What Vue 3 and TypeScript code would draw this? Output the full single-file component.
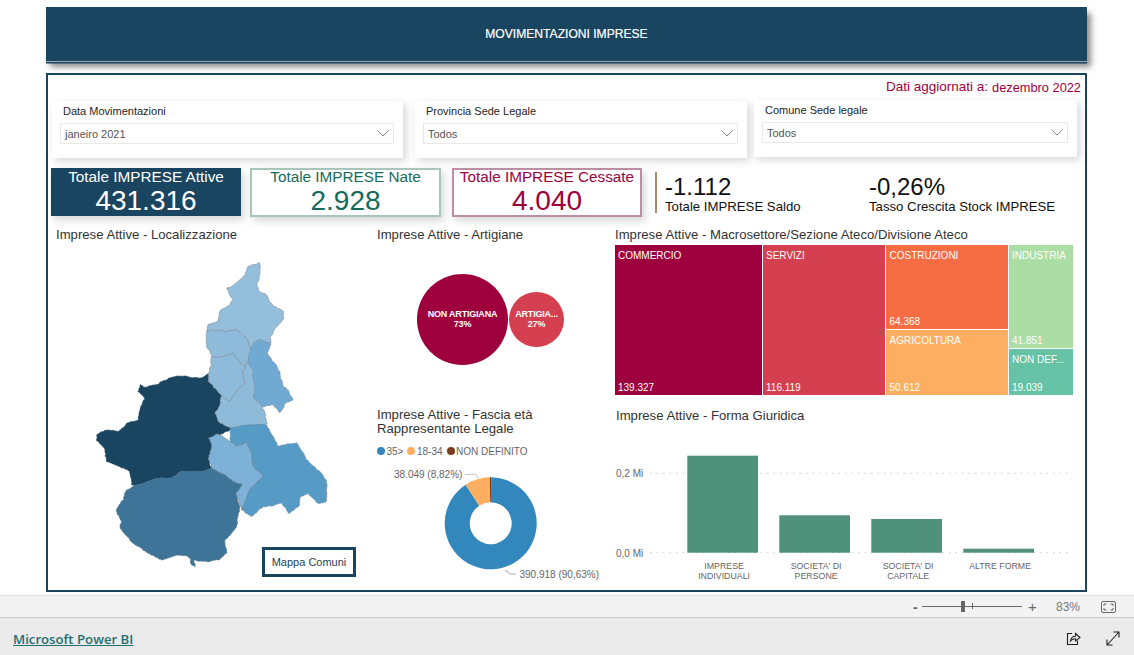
<script setup lang="ts">
type Pt = [number, number]

function hash(x: number, y: number): number {
  const v = Math.sin(x * 12.9898 + y * 78.233) * 43758.5453
  return v - Math.floor(v)
}

// Midpoint displacement keyed on the position, so shared borders stay identical.
function roughEdge(a: Pt, b: Pt, amp: number, out: Pt[]): void {
  const len = Math.hypot(b[0] - a[0], b[1] - a[1])
  if (len < 5) {
    out.push(b)
    return
  }
  const mx = Math.round((a[0] + b[0]) * 2) / 4
  const my = Math.round((a[1] + b[1]) * 2) / 4
  const m: Pt = [mx + (hash(mx, my) - 0.5) * amp, my + (hash(my, mx) - 0.5) * amp]
  roughEdge(a, m, amp * 0.8, out)
  roughEdge(m, b, amp * 0.8, out)
}

function toPath(pts: Pt[]): string {
  const out: Pt[] = [pts[0]]
  pts.forEach((p, i) => roughEdge(p, pts[(i + 1) % pts.length], 4.5, out))
  return 'M' + out.map((p) => `${p[0].toFixed(1)} ${p[1].toFixed(1)}`).join('L') + 'Z'
}

const regions = [
  {
    name: 'Torino',
    fill: '#1a4560',
    stroke: '#1a4560',
    pts: [[385, 372], [360, 385], [300, 378], [265, 385], [235, 403], [190, 412], [180, 405], [173, 425], [195, 445], [180, 480], [175, 510], [140, 520], [115, 545], [85, 540], [50, 555], [50, 572], [75, 600], [80, 635], [150, 665], [155, 705], [170, 705], [230, 685], [270, 685], [300, 665], [350, 665], [395, 655], [385, 625], [395, 590], [385, 565], [430, 550], [455, 535], [415, 515], [405, 490], [420, 465], [425, 435], [385, 395]] as Pt[]
  },
  {
    name: 'Cuneo',
    fill: '#3e7498',
    stroke: '#4a6e88',
    pts: [[170, 705], [140, 720], [130, 750], [108, 780], [122, 810], [120, 835], [160, 880], [205, 910], [245, 930], [300, 915], [325, 920], [335, 945], [345, 950], [342, 930], [385, 935], [415, 930], [440, 910], [435, 870], [470, 830], [475, 790], [480, 770], [468, 730], [487, 705], [460, 695], [430, 672], [395, 655], [350, 665], [300, 665], [270, 685], [230, 685]] as Pt[]
  },
  {
    name: 'Verbano',
    fill: '#93bedc',
    stroke: '#84909a',
    pts: [[538, 38], [541, 70], [530, 100], [535, 122], [560, 135], [578, 165], [608, 182], [610, 208], [585, 235], [570, 262], [572, 280], [540, 268], [520, 280], [512, 300], [500, 265], [465, 238], [435, 245], [400, 240], [380, 245], [385, 222], [415, 212], [422, 180], [450, 165], [460, 150], [440, 115], [470, 98], [495, 75], [505, 50]] as Pt[]
  },
  {
    name: 'Biella',
    fill: '#8fbbdb',
    stroke: '#84909a',
    pts: [[380, 245], [400, 240], [435, 245], [465, 238], [500, 265], [512, 300], [503, 335], [495, 350], [460, 310], [430, 320], [395, 322], [382, 295], [378, 270]] as Pt[]
  },
  {
    name: 'Vercelli',
    fill: '#8fbbdb',
    stroke: '#84909a',
    pts: [[395, 322], [430, 320], [460, 310], [495, 350], [488, 365], [495, 395], [470, 425], [450, 455], [425, 435], [385, 395], [385, 372], [392, 350]] as Pt[]
  },
  {
    name: 'Vercelli sud',
    fill: '#8fbbdb',
    stroke: '#84909a',
    pts: [[495, 350], [503, 335], [520, 365], [522, 445], [545, 465], [555, 490], [562, 522], [510, 525], [455, 535], [415, 515], [405, 490], [420, 465], [425, 435], [450, 455], [470, 425], [495, 395], [488, 365]] as Pt[]
  },
  {
    name: 'Novara',
    fill: '#70aad3',
    stroke: '#7d93a3',
    pts: [[512, 300], [520, 280], [540, 268], [572, 280], [562, 310], [585, 340], [600, 370], [610, 410], [625, 420], [640, 450], [615, 460], [600, 488], [580, 465], [550, 470], [522, 445], [520, 365], [503, 335]] as Pt[]
  },
  {
    name: 'Alessandria',
    fill: '#569bc6',
    stroke: '#6f8ea3',
    pts: [[450, 535], [510, 525], [560, 525], [585, 570], [595, 590], [650, 578], [680, 630], [725, 670], [740, 695], [738, 755], [715, 760], [685, 730], [660, 740], [655, 770], [625, 790], [605, 760], [550, 770], [515, 800], [485, 780], [500, 745], [510, 715], [550, 680], [520, 650], [515, 610], [500, 575], [470, 590], [450, 575]] as Pt[]
  },
  {
    name: 'Asti',
    fill: '#7db1d7',
    stroke: '#6b7f8e',
    pts: [[385, 625], [395, 590], [385, 565], [410, 552], [450, 575], [470, 590], [500, 575], [515, 610], [520, 650], [550, 680], [510, 715], [500, 745], [485, 780], [468, 730], [487, 705], [460, 695], [430, 672], [395, 650]] as Pt[]
  }
].map((r) => ({ ...r, d: toPath(r.pts) }))

const filters = [
  { id: 'data', label: 'Data Movimentazioni', value: 'janeiro 2021' },
  { id: 'provincia', label: 'Provincia Sede Legale', value: 'Todos' },
  { id: 'comune', label: 'Comune Sede legale', value: 'Todos' }
]

const kpis = [
  { id: 'attive', title: 'Totale IMPRESE Attive', value: '431.316' },
  { id: 'nate', title: 'Totale IMPRESE Nate', value: '2.928' },
  { id: 'cessate', title: 'Totale IMPRESE Cessate', value: '4.040' }
]

// Donut slices, clockwise from 12 o'clock.
const donutCx = 120.7
const donutCy = 63.3
function slice(from: number, to: number, r1: number, r2: number): string {
  const pt = (a: number, r: number) => {
    const t = (a / 100) * Math.PI * 2
    return `${(donutCx + Math.sin(t) * r).toFixed(2)} ${(donutCy - Math.cos(t) * r).toFixed(2)}`
  }
  const large = to - from > 50 ? 1 : 0
  return `M${pt(from, r1)}A${r1} ${r1} 0 ${large} 1 ${pt(to, r1)}L${pt(to, r2)}A${r2} ${r2} 0 ${large} 0 ${pt(from, r2)}Z`
}
const slices = [
  { fill: '#3288bd', d: slice(0.2, 90.83, 46, 21) },
  { fill: '#fdae61', d: slice(90.83, 99.65, 46, 21) },
  { fill: '#7a3a20', d: slice(99.65, 100.2, 46, 21) }
]

const legend = [
  { label: '35>', color: '#3288bd' },
  { label: '18-34', color: '#fdae61' },
  { label: 'NON DEFINITO', color: '#7a3a20' }
]

const bars = [
  { x: 77.3, y: 30.7, h: 97, lines: ['IMPRESE', 'INDIVIDUALI'] },
  { x: 169.3, y: 90.3, h: 37.4, lines: ["SOCIETA' DI", 'PERSONE'] },
  { x: 261.3, y: 94, h: 33.7, lines: ["SOCIETA' DI", 'CAPITALE'] },
  { x: 353.3, y: 123.7, h: 4, lines: ['ALTRE FORME'] }
]
</script>

<template>
  <div class="page">
    <main class="report">
      <header class="banner">MOVIMENTAZIONI IMPRESE</header>

      <section class="panel">
        <div class="updated">
          <span>Dati aggiornati a:</span>
          <span class="updated-date">dezembro 2022</span>
        </div>

        <div class="filters">
          <div v-for="f in filters" :key="f.id" class="slicer" :class="`slicer-${f.id}`">
            <div class="slicer-label">{{ f.label }}</div>
            <div class="slicer-box">
              <span>{{ f.value }}</span>
              <svg class="chevron" width="12" height="7" viewBox="0 0 12 7">
                <path d="M0.5 0.5L6 6L11.5 0.5" fill="none" stroke="#8a8a8a" stroke-width="1" />
              </svg>
            </div>
          </div>
        </div>

        <div class="kpis">
          <div v-for="k in kpis" :key="k.id" class="kpi" :class="`kpi-${k.id}`">
            <div class="kpi-title">{{ k.title }}</div>
            <div class="kpi-value">{{ k.value }}</div>
          </div>
          <div class="stat stat-saldo">
            <div class="stat-value">-1.112</div>
            <div class="stat-label">Totale IMPRESE Saldo</div>
          </div>
          <div class="stat stat-tasso">
            <div class="stat-value">-0,26%</div>
            <div class="stat-label">Tasso Crescita Stock IMPRESE</div>
          </div>
        </div>

        <div class="body">
          <div class="col-map">
            <h2 class="title title-map">Imprese Attive - Localizzazione</h2>
            <div class="map">
              <svg width="290" height="340" viewBox="0 0 870 1020">
                <path
                  v-for="r in regions"
                  :key="r.name"
                  :d="r.d"
                  :fill="r.fill"
                  :stroke="r.stroke"
                  stroke-width="2"
                  stroke-linejoin="round"
                />
              </svg>
              <div class="map-button">Mappa Comuni</div>
            </div>
          </div>

          <div class="col-mid">
            <div class="block-bubbles">
              <h2 class="title">Imprese Attive - Artigiane</h2>
              <div class="bubbles">
                <div class="bubble bubble-big"><span>NON ARTIGIANA</span><span>73%</span></div>
                <div class="bubble bubble-small"><span>ARTIGIA...</span><span>27%</span></div>
              </div>
            </div>
            <div class="block-donut">
              <h2 class="title title-two">Imprese Attive - Fascia età<br />Rappresentante Legale</h2>
              <div class="legend">
                <span v-for="l in legend" :key="l.label" class="legend-item">
                  <i class="dot" :style="{ background: l.color }"></i>{{ l.label }}
                </span>
              </div>
              <svg class="donut" width="240" height="130" viewBox="0 0 240 130">
                <path v-for="s in slices" :key="s.fill" :d="s.d" :fill="s.fill" />
                <path d="M95 14.300H106L108.500 18.300" fill="none" stroke="#c4c4c4" />
                <path d="M135 110L140 114H146" fill="none" stroke="#a8a8a8" />
                <text x="24" y="17.500" class="donut-label">38.049 (8,82%)</text>
                <text x="149.500" y="117.500" class="donut-label">390.918 (90,63%)</text>
              </svg>
            </div>
          </div>

          <div class="col-right">
            <h2 class="title title-tree">Imprese Attive - Macrosettore/Sezione Ateco/Divisione Ateco</h2>
            <div class="treemap">
              <div class="cell cell-comm"><span>COMMERCIO</span><span>139.327</span></div>
              <div class="cell cell-serv"><span>SERVIZI</span><span>116.119</span></div>
              <div class="tree-col tree-col-a">
                <div class="cell cell-cost"><span>COSTRUZIONI</span><span>64.368</span></div>
                <div class="cell cell-agri"><span>AGRICOLTURA</span><span>50.612</span></div>
              </div>
              <div class="tree-col tree-col-b">
                <div class="cell cell-indu"><span>INDUSTRIA</span><span>41.851</span></div>
                <div class="cell cell-nond"><span>NON DEF...</span><span>19.039</span></div>
              </div>
            </div>
            <h2 class="title title-bars">Imprese Attive - Forma Giuridica</h2>
            <svg class="bars" width="475" height="160" viewBox="0 0 475 160">
              <line x1="40" x2="463" y1="48.300" y2="48.300" stroke="#cfcfcf" stroke-dasharray="1.500 5" />
              <line x1="40" x2="463" y1="127.700" y2="127.700" stroke="#cfcfcf" stroke-dasharray="1.500 5" />
              <text x="6" y="52" class="axis">0,2 Mi</text>
              <text x="6" y="131.500" class="axis">0,0 Mi</text>
              <rect v-for="b in bars" :key="b.x" :x="b.x" :y="b.y" width="70.700" :height="b.h" fill="#4f917a" />
              <template v-for="b in bars" :key="`t${b.x}`">
                <text
                  v-for="(line, i) in b.lines"
                  :key="line"
                  :x="b.x + 36.800"
                  :y="144 + i * 10"
                  text-anchor="middle"
                  class="cat"
                >{{ line }}</text>
              </template>
            </svg>
          </div>
        </div>
      </section>
    </main>

    <div class="statusbar">
      <span class="zoom-sign">-</span>
      <div class="slider">
        <i class="slider-tick"></i>
        <i class="slider-thumb"></i>
      </div>
      <span class="zoom-sign zoom-plus">+</span>
      <span class="zoom-pct">83%</span>
      <svg class="fit" width="15" height="12" viewBox="0 0 15 12" fill="none" stroke="#666">
        <rect x="0.500" y="0.500" width="14" height="11" rx="1.500" />
        <path d="M3 5V3H5.500M9.500 3H12V5M12 7V9H9.500M5.500 9H3V7" />
      </svg>
    </div>

    <footer class="footer">
      <a class="pbi-link">Microsoft Power BI</a>
      <svg class="share" width="15" height="15" viewBox="0 0 15 15" fill="none" stroke="#222" stroke-width="1.100">
        <path d="M6 2.500H1.500V13.500H11.500V9.500" />
        <path d="M4.500 10C5 7 7 5.300 9.500 5.300V2.500L14 6.500L9.500 10V7.700C7.500 7.700 5.800 8.500 4.500 10Z" />
      </svg>
      <svg class="expand" width="14" height="15" viewBox="0 0 14 15" fill="none" stroke="#222" stroke-width="1.100">
        <path d="M1 14L13 1M7.500 1H13V6.500M1 8.500V14H6.500" />
      </svg>
    </footer>
  </div>
</template>

<style scoped>
* {
  box-sizing: border-box;
}
.page {
  width: 1134px;
  height: 655px;
  display: flex;
  flex-direction: column;
  background: #fff;
  overflow: hidden;
  font-family: "Liberation Sans", Arial, sans-serif;
  color: #252423;
}
.report {
  height: 595px;
  padding: 7px 47px 0 46px;
}
.banner {
  height: 54px;
  background: #1a4560;
  color: #fff;
  font-size: 12.100px;
  font-weight: 500;
  -webkit-text-stroke: 0.2px #fff;
  display: flex;
  align-items: center;
  justify-content: center;
  box-shadow: 0 1px 0 #9fabb3, 0 2.500px 0 #1a4560, 4px 6px 6px rgba(0, 0, 0, 0.45);
}
.panel {
  height: 519px;
  margin-top: 12px;
  border: 2px solid #1a4560;
  background: #fff;
}
.updated {
  height: 25px;
  padding: 4px 4px 0 0;
  display: flex;
  justify-content: flex-end;
  gap: 4px;
  font-size: 13.500px;
  line-height: 16px;
  color: #9e003e;
}
.updated-date {
  font-size: 12.800px;
  padding-top: 1px;
}
.filters {
  height: 58px;
  padding-left: 4px;
  display: flex;
}
.slicer {
  height: 57px;
  background: #fff;
  box-shadow: 3px 3px 8px rgba(0, 0, 0, 0.16);
  padding: 4px 9px 0 8px;
  display: flex;
  flex-direction: column;
}
.slicer-data {
  width: 351px;
  margin-top: 1px;
}
.slicer-provincia {
  width: 332px;
  margin: 1px 0 0 12px;
}
.slicer-comune {
  width: 323px;
  margin-left: 7px;
}
.slicer-label {
  height: 18px;
  padding-left: 3px;
  font-size: 11px;
  line-height: 13px;
  color: #252423;
}
.slicer-box {
  height: 20.500px;
  border: 1px solid #e9e9e9;
  padding: 1px 4px 0 4px;
  display: flex;
  align-items: center;
  justify-content: space-between;
  font-size: 11px;
  color: #555;
}
.kpis {
  height: 49px;
  margin-top: 10px;
  padding-left: 3px;
  display: flex;
}
.kpi {
  width: 190px;
  height: 49px;
  border: 2px solid;
  text-align: center;
  box-shadow: 3px 4px 8px rgba(0, 0, 0, 0.16);
}
.kpi-title {
  font-size: 15.300px;
  line-height: 15px;
  margin-top: -1px;
  white-space: nowrap;
}
.kpi-value {
  font-size: 28px;
  line-height: 32px;
  margin-top: 1px;
}
.kpi-attive {
  height: 48px;
  background: #1a4560;
  border-color: #1a4560;
  color: #fff;
}
.kpi-nate {
  width: 191px;
  margin-left: 9px;
  border-color: #a9c4bb;
  color: #146b5c;
}
.kpi-cessate {
  width: 190px;
  margin-left: 11px;
  border-color: #bb8ea3;
  color: #9e003e;
}
.stat {
  height: 41px;
  margin-top: 4px;
}
.stat-saldo {
  width: 214px;
  margin-left: 13px;
  padding-left: 8px;
  border-left: 2px solid #a68a6d;
}
.stat-value {
  font-size: 24px;
  line-height: 27px;
  margin-top: 1px;
  color: #111;
}
.stat-label {
  font-size: 13.200px;
  line-height: 14px;
  color: #111;
  white-space: nowrap;
}
.body {
  display: flex;
  height: 373px;
  margin-top: 8px;
}
.title {
  margin: 0;
  font-size: 13.150px;
  font-weight: 400;
  line-height: 14px;
  color: #333;
  white-space: nowrap;
}
.col-map {
  width: 322px;
  flex: none;
}
.title-map {
  padding: 3px 0 0 8px;
}
.map {
  position: relative;
  width: 290px;
  height: 340px;
  margin: 8px 0 0 32px;
}
.map svg {
  display: block;
}
.map-button {
  position: absolute;
  left: 182px;
  top: 297px;
  width: 94px;
  height: 30px;
  border: 3px solid #1a4560;
  background: #fff;
  font-size: 11px;
  color: #1f3f58;
  display: flex;
  align-items: center;
  justify-content: center;
}
.col-mid {
  width: 240px;
  flex: none;
}
.block-bubbles {
  height: 182px;
  padding-top: 3px;
}
.block-bubbles .title,
.title-two {
  padding-left: 7px;
}
.bubbles {
  display: flex;
  align-items: center;
  height: 91px;
  margin: 32px 0 0 47px;
  gap: 1px;
}
.bubble {
  border-radius: 50%;
  flex: none;
  display: flex;
  flex-direction: column;
  align-items: center;
  justify-content: center;
  color: #fff;
  font-size: 9px;
  font-weight: 700;
  line-height: 10px;
  letter-spacing: -0.200px;
  white-space: nowrap;
  padding-bottom: 1px;
}
.bubble-big {
  width: 91px;
  height: 91px;
  background: #9e003e;
}
.bubble-small {
  width: 55px;
  height: 55px;
  background: #d54050;
}
.block-donut {
  height: 190px;
  padding-top: 1px;
}
.legend {
  display: flex;
  gap: 4px;
  margin: 8px 0 0 7px;
  height: 14px;
  align-items: center;
  font-size: 10px;
  color: #666;
}
.legend-item {
  display: flex;
  align-items: center;
  gap: 1.500px;
}
.dot {
  width: 8px;
  height: 8px;
  border-radius: 50%;
}
.donut {
  display: block;
  margin-top: 2px;
}
.donut-label {
  font-size: 10px;
  fill: #666;
}
.col-right {
  flex: 1;
  min-width: 0;
}
.title-tree {
  padding: 3px 0 0 5px;
}
.treemap {
  display: flex;
  gap: 1px;
  width: 458px;
  height: 149.500px;
  margin: 3px 0 0 4.500px;
}
.tree-col {
  display: flex;
  flex-direction: column;
  gap: 1px;
  flex: none;
}
.cell {
  display: flex;
  flex-direction: column;
  justify-content: space-between;
  padding: 5px 3.500px 1px;
  font-size: 10px;
  line-height: 12px;
  color: #fff;
  white-space: nowrap;
  overflow: hidden;
}
.cell-comm {
  width: 147px;
  background: #9e003e;
  flex: none;
}
.cell-serv {
  width: 122.500px;
  background: #d54050;
  flex: none;
}
.tree-col-a {
  width: 121.500px;
}
.tree-col-b {
  width: 64px;
}
.cell-cost {
  height: 83.500px;
  background: #f76d43;
}
.cell-agri {
  height: 65px;
  background: #fdae61;
}
.cell-indu {
  height: 102.500px;
  background: #abdda4;
}
.cell-nond {
  height: 46px;
  background: #66c2a5;
}
.title-bars {
  padding: 14px 0 0 6px;
}
.bars {
  display: block;
  margin: 2px 0 0 0;
}
.axis {
  font-size: 10px;
  fill: #666;
}
.cat {
  font-size: 8.800px;
  fill: #666;
}
.statusbar {
  height: 23px;
  background: #f3f3f3;
  border-top: 1px solid #e0e0e0;
  border-bottom: 1px solid #c8c8c8;
  display: flex;
  align-items: center;
  padding-left: 912px;
}
.zoom-sign {
  width: 10px;
  font-size: 14px;
  font-weight: 700;
  color: #666;
  line-height: 14px;
  padding-left: 1px;
}
.zoom-plus {
  margin-left: 6px;
  padding-left: 0;
  font-weight: 400;
  font-size: 15px;
}
.slider {
  position: relative;
  width: 100px;
  height: 1px;
  background: #666;
}
.slider-thumb {
  position: absolute;
  left: 39px;
  top: -5px;
  width: 4px;
  height: 11px;
  background: #666;
}
.slider-tick {
  position: absolute;
  left: 50px;
  top: -3px;
  width: 1px;
  height: 6px;
  background: #666;
}
.zoom-pct {
  margin-left: 18px;
  width: 45px;
  font-size: 12px;
  color: #777;
}
.footer {
  flex: 1;
  background: #eaeaea;
  display: flex;
  align-items: center;
  padding: 4px 14px 0 13px;
}
.pbi-link {
  font-family: "Open Sans", "Noto Sans", sans-serif;
  font-size: 13.200px;
  font-weight: 600;
  color: #1f6f73;
  text-decoration: underline;
  flex: 1;
}
.expand {
  margin-left: 25px;
}
</style>

<style>
body {
  margin: 0;
  background: #fff;
}
</style>
